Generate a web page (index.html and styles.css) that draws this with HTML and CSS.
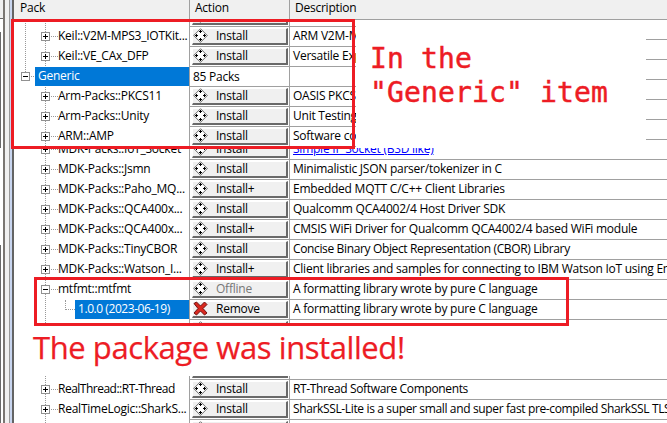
FILE: index.html
```html
<!DOCTYPE html>
<html lang="en">
<head>
<meta charset="utf-8">
<title>Pack Installer</title>
<link rel="stylesheet" href="styles.css">
</head>
<body>
<svg class="defs" aria-hidden="true">
<symbol id="pack" viewBox="0 0 15 15"><path class="gem" d="M7.5.7 14.3 7.5 7.5 14.3.7 7.5Z"/><path class="dots" d="M7 2h1v1h1v1H8v1H7V4H6V3h1zM7 10h1v1h1v1H8v1H7v-1H6v-1h1zM3 6h1v1h1v1H4v1H3V8H2V7h1zM11 6h1v1h1v1h-1v1h-1V8h-1V7h1z"/></symbol>
<symbol id="cross" viewBox="0 0 15 15"><path class="cross" d="M1 2.5 3.5 1 7.5 5 11.5 1 14 3.5 10 7.5 14 12 11.5 14 7.5 10 3.5 14 1 12 5 7.5Z"/></symbol>
</svg>
<div class="app">
<aside class="edge"><i class="track"></i><i class="frame"></i></aside>
<main class="table">
<div class="row head"><span class="name">Pack</span><span class="action">Action</span><span class="desc">Description</span></div>
<div class="row"></div><div class="row"></div><div class="row"></div><div class="row"></div><div class="row"></div><div class="row"></div>
<div class="row"><div class="name"><i class="box plus"></i><i class="twig"></i><span>MDK-Packs::IoT_Socket</span></div><div class="action"><div class="btn"><svg><use href="#pack"/></svg>Install</div></div><div class="desc link">Simple IP Socket (BSD like)</div></div>
<div class="row"><div class="name"><i class="box plus"></i><i class="twig"></i><span>MDK-Packs::Jsmn</span></div><div class="action"><div class="btn"><svg><use href="#pack"/></svg>Install</div></div><div class="desc">Minimalistic JSON parser/tokenizer in C</div></div>
<div class="row"><div class="name"><i class="box plus"></i><i class="twig"></i><span>MDK-Packs::Paho_MQ...</span></div><div class="action"><div class="btn"><svg><use href="#pack"/></svg>Install+</div></div><div class="desc">Embedded MQTT C/C++ Client Libraries</div></div>
<div class="row"><div class="name"><i class="box plus"></i><i class="twig"></i><span>MDK-Packs::QCA400x...</span></div><div class="action"><div class="btn"><svg><use href="#pack"/></svg>Install</div></div><div class="desc">Qualcomm QCA4002/4 Host Driver SDK</div></div>
<div class="row"><div class="name"><i class="box plus"></i><i class="twig"></i><span>MDK-Packs::QCA400x...</span></div><div class="action"><div class="btn"><svg><use href="#pack"/></svg>Install+</div></div><div class="desc">CMSIS WiFi Driver for Qualcomm QCA4002/4 based WiFi module</div></div>
<div class="row"><div class="name"><i class="box plus"></i><i class="twig"></i><span>MDK-Packs::TinyCBOR</span></div><div class="action"><div class="btn"><svg><use href="#pack"/></svg>Install</div></div><div class="desc tight">Concise Binary Object Representation (CBOR) Library</div></div>
<div class="row"><div class="name"><i class="box plus"></i><i class="twig"></i><span>MDK-Packs::Watson_I...</span></div><div class="action"><div class="btn"><svg><use href="#pack"/></svg>Install+</div></div><div class="desc">Client libraries and samples for connecting to IBM Watson IoT using Em</div></div>
<div class="row"><div class="name"><i class="box"></i><i class="twig"></i><span>mtfmt::mtfmt</span></div><div class="action"><div class="btn off"><svg><use href="#pack"/></svg>Offline</div></div><div class="desc">A formatting library wrote by pure C language</div></div>
<div class="row"><div class="name child"><i class="elbow"></i><span class="sel">1.0.0 (2023-06-19)</span></div><div class="action"><div class="btn"><svg><use href="#cross"/></svg>Remove</div></div><div class="desc">A formatting library wrote by pure C language</div></div>
<div class="row"><div class="name"></div><div class="action"><div class="btn"><svg><use href="#pack"/></svg></div></div><div class="desc"></div></div>
<div class="row"></div>
<div class="row"><div class="name"></div><div class="action"><div class="btn"></div></div><div class="desc"></div></div>
<div class="row"><div class="name narrow"><i class="box plus"></i><i class="twig"></i><span>RealThread::RT-Thread</span></div><div class="action"><div class="btn"><svg><use href="#pack"/></svg>Install</div></div><div class="desc tight">RT-Thread Software Components</div></div>
<div class="row"><div class="name"><i class="box plus"></i><i class="twig"></i><span>RealTimeLogic::SharkS...</span></div><div class="action"><div class="btn"><svg><use href="#pack"/></svg>Install</div></div><div class="desc tight">SharkSSL-Lite is a super small and super fast pre-compiled SharkSSL TLS</div></div>
<div class="row"><div class="name"></div><div class="action"><div class="btn"><svg><use href="#pack"/></svg></div></div><div class="desc"></div></div>
</main>
</div>
<section class="note generic"><p>In the<br>"Generic" item</p></section>
<section class="inset"><div class="table">
<div class="row"><div class="name outer"><i class="box plus"></i><i class="twig"></i><span>Keil::V2M-MPS2_IOTKit...</span></div><div class="action"><div class="btn"><svg><use href="#pack"/></svg></div></div><div class="desc"></div></div>
<div class="row"><div class="name outer"><i class="box plus"></i><i class="twig"></i><span>Keil::V2M-MPS3_IOTKit...</span></div><div class="action"><div class="btn"><svg><use href="#pack"/></svg>Install</div></div><div class="desc">ARM V2M-MPS3</div></div>
<div class="row"><div class="name outer"><i class="box plus"></i><i class="twig"></i><span>Keil::VE_CAx_DFP</span></div><div class="action"><div class="btn"><svg><use href="#pack"/></svg>Install</div></div><div class="desc">Versatile Express</div></div>
<div class="row"><div class="name root"><i class="box"></i><i class="twig"></i><span class="sel">Generic</span></div><div class="action count">85 Packs</div><div class="desc"></div></div>
<div class="row"><div class="name"><i class="box plus"></i><i class="twig"></i><span>Arm-Packs::PKCS11</span></div><div class="action"><div class="btn"><svg><use href="#pack"/></svg>Install</div></div><div class="desc">OASIS PKCS</div></div>
<div class="row"><div class="name"><i class="box plus"></i><i class="twig"></i><span>Arm-Packs::Unity</span></div><div class="action"><div class="btn"><svg><use href="#pack"/></svg>Install</div></div><div class="desc">Unit Testing</div></div>
<div class="row"><div class="name"><i class="box plus"></i><i class="twig"></i><span>ARM::AMP</span></div><div class="action"><div class="btn"><svg><use href="#pack"/></svg>Install</div></div><div class="desc">Software component</div></div>
</div></section>
<div class="mark top"></div>
<div class="mark bottom"></div>
<section class="note installed"><p>The package was installed!</p></section>
</body>
</html>
```

FILE: styles.css
```css
* { box-sizing: border-box; }
body { margin: 0; width: 667px; height: 423px; overflow: hidden; position: relative; background: #fff; color: #000; font: 12px/18px "Open Sans", "Noto Sans", sans-serif; letter-spacing: -.24px; white-space: nowrap; }
.defs { position: absolute; width: 0; height: 0; }
.app { display: flex; height: 423px; }
.edge { width: 14px; flex: none; display: flex; background: #f0f0f0; }
.track { width: 5px; border-right: 2px solid #7a7672; background: linear-gradient(#f0f0f0, #f0f0f0) 0 0/3px 18px no-repeat, linear-gradient(#696969, #696969) 0 18px/3px 1px no-repeat, linear-gradient(#696969, #696969) 0 32px/1px 116px no-repeat, linear-gradient(#696969, #696969) 0 245px/1px 178px no-repeat, #fff; }
.frame { width: 5px; margin-left: auto; background: #c8d5ef; border-left: 1px solid #999; border-right: 2px solid #646464; }
.table { flex: 1; min-width: 0; }
.row { display: grid; grid-template-columns: 176px 100px 1fr; height: 20px; border-bottom: 1px solid #a0a0a0; }
.name { display: flex; align-items: center; height: 20px; padding: 0 0 1px 27px; border-right: 1px solid #a0a0a0; background: repeating-linear-gradient(#999 0 1px, #fff 1px 2px) 31px 0/1px 100% no-repeat, #fff; overflow: hidden; }
.name.outer { background: repeating-linear-gradient(#999 0 1px, #fff 1px 2px) 31px 0/1px 100% no-repeat, repeating-linear-gradient(#999 0 1px, #fff 1px 2px) 11px 0/1px 100% no-repeat, #fff; }
.action { padding: 1px 0 0 2px; border-right: 1px solid #a0a0a0; }
.action.count { padding-left: 3px; }
.desc { padding-left: 3px; overflow: hidden; }
.tight { letter-spacing: -.36px; }
.narrow { letter-spacing: -.5px; }
.link { color: #00f; text-decoration: underline; }
.head { background: #f0f0f0; }
.head .name { background: none; height: 19px; padding: 0 0 3px 6px; }
.head .action { padding: 0 0 0 5px; line-height: 16px; }
.head .desc { padding-left: 5px; line-height: 16px; }
.box { width: 9px; height: 9px; flex: none; border: 1px solid #919191; background: linear-gradient(#000, #000) center/5px 1px no-repeat, #fff; }
.plus { background: linear-gradient(#000, #000) center/5px 1px no-repeat, linear-gradient(#000, #000) center/1px 5px no-repeat, #fff; }
.twig { width: 8px; height: 1px; flex: none; background: repeating-linear-gradient(90deg, #fff 0 1px, #999 1px 2px); }
.name > span:not(.sel) { line-height: 18px; padding-bottom: 1px; }
.sel { flex: 1; height: 19px; line-height: 17px; padding-left: 3px; background: #0078d7; color: #fff; }
.root { padding-left: 7px; background: repeating-linear-gradient(#999 0 1px, #fff 1px 2px) 11px 0/1px 8px no-repeat, #fff; }
.root .twig { width: 5px; }
.child { padding-left: 51px; }
.child .sel { letter-spacing: -.44px; }
.elbow { width: 10px; height: 10px; margin-bottom: 9px; border-left: 1px dotted #999; border-bottom: 1px dotted #999; }
.btn { display: flex; align-items: center; height: 17px; width: 96px; padding-bottom: 1px; background: #f0f0f0; border: 1px solid #fff; border-right: 2px solid #696969; border-bottom: 2px solid #696969; }
.btn svg { width: 15px; height: 15px; margin-right: 8px; flex: none; }
.gem { fill: #fff; stroke: #444; stroke-width: .8; }
.dots { fill: #000; shape-rendering: crispEdges; }
.off { color: #777; }
.off .gem { fill: #ff0; }
.cross { fill: #d9281f; stroke: #701010; }
.inset { position: absolute; left: 14px; top: 20px; width: 342px; height: 128px; overflow: hidden; background: #fff; }
.inset .table { margin-top: -13px; }
.note { position: absolute; background: #fff; color: #ed1c24; }
.note p { margin: 0; }
.generic { left: 355px; top: 20px; width: 291px; height: 128px; padding: 22px 0 0 15px; font: 28px/34px "DejaVu Sans Mono", monospace; letter-spacing: .15px; -webkit-text-stroke: .5px #ed1c24; }
.installed { left: 14px; top: 326px; width: 653px; height: 50px; padding-left: 19px; font-size: 31px; line-height: 43px; letter-spacing: -.42px; -webkit-text-stroke: .25px #ed1c24; }
.mark { position: absolute; border: 3px solid #ed1c24; }
.top { left: 11px; top: 19px; width: 344px; height: 130px; }
.bottom { left: 34px; top: 277px; width: 535px; height: 49px; }
```
